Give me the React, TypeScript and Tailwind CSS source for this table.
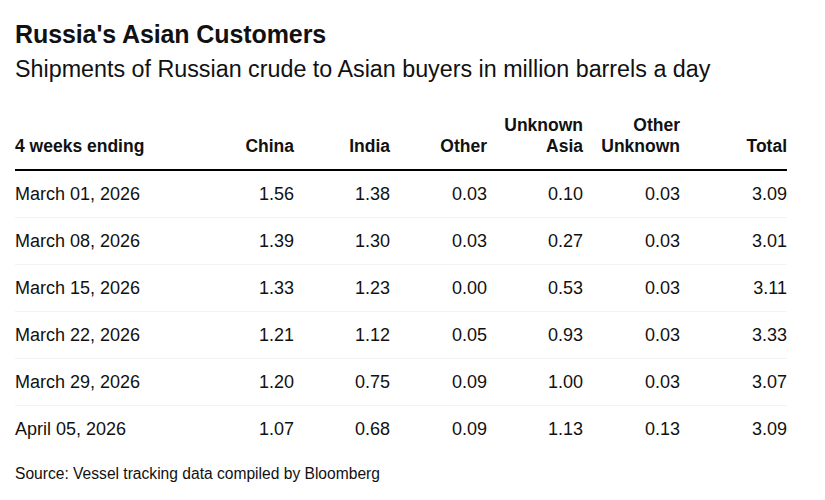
import React from 'react';

interface Row {
  date: string;
  values: string[];
}

const columns = ['China', 'India', 'Other', 'Unknown Asia', 'Other Unknown', 'Total'];

const rows: Row[] = [
  { date: 'March 01, 2026', values: ['1.56', '1.38', '0.03', '0.10', '0.03', '3.09'] },
  { date: 'March 08, 2026', values: ['1.39', '1.30', '0.03', '0.27', '0.03', '3.01'] },
  { date: 'March 15, 2026', values: ['1.33', '1.23', '0.00', '0.53', '0.03', '3.11'] },
  { date: 'March 22, 2026', values: ['1.21', '1.12', '0.05', '0.93', '0.03', '3.33'] },
  { date: 'March 29, 2026', values: ['1.20', '0.75', '0.09', '1.00', '0.03', '3.07'] },
  { date: 'April 05, 2026', values: ['1.07', '0.68', '0.09', '1.13', '0.13', '3.09'] },
];

const gridCols = 'grid grid-cols-[182px_97px_96px_97px_96px_97px_107px]';

const App: React.FC = () => {
  return (
    <div
      className="w-[825px] h-[500px] bg-white text-[#111] px-[15px] pt-[19px]"
      style={{ fontFamily: '"Liberation Sans", Arial, sans-serif' }}
    >
      <h1 className="text-[25px] leading-[30px] font-bold tracking-[-0.1px]">Russia's Asian Customers</h1>
      <p className="mt-[5px] text-[23.3px] leading-[30px]">
        Shipments of Russian crude to Asian buyers in million barrels a day
      </p>

      <div className="w-[772px] mt-[31px]">
        {/* header */}
        <div className={`${gridCols} items-end pb-[12px] border-b-[2.5px] border-black text-[17.5px] leading-[21px] font-bold`}>
          <div>4 weeks ending</div>
          {columns.map(col => (
            <div key={col} className="text-right">
              {col.split(' ').map((word, i) => (
                <div key={i}>{word}</div>
              ))}
            </div>
          ))}
        </div>

        {/* body */}
        {rows.map((row, idx) => (
          <div
            key={row.date}
            className={`${gridCols} items-center h-[47px] text-[18px] ${
              idx < rows.length - 1 ? 'border-b border-[#f3f3f3]' : ''
            }`}
          >
            <div>{row.date}</div>
            {row.values.map((v, i) => (
              <div key={i} className="text-right">{v}</div>
            ))}
          </div>
        ))}
      </div>

      <p className="mt-[11px] text-[15.6px] leading-[20px]">
        Source: Vessel tracking data compiled by Bloomberg
      </p>
    </div>
  );
};

export default App;
